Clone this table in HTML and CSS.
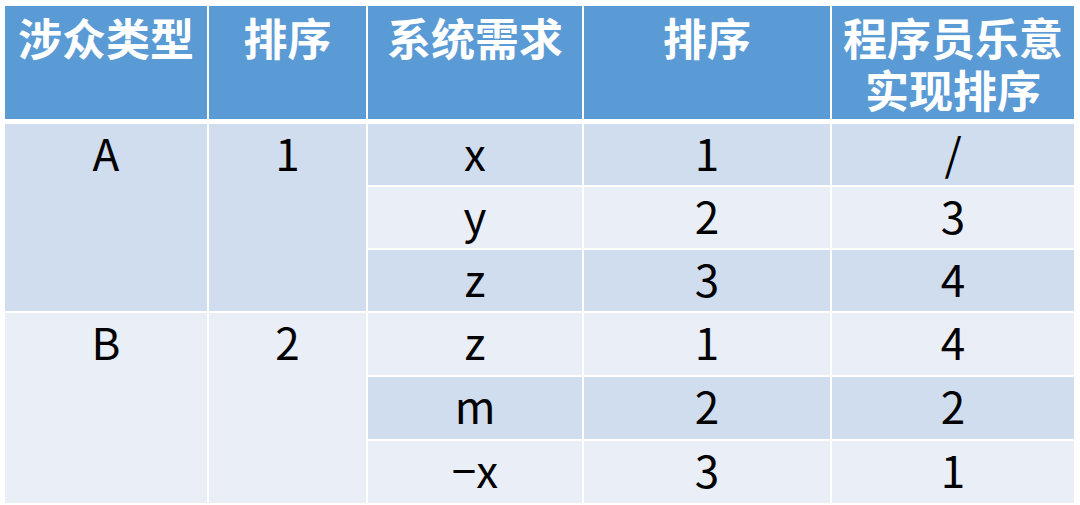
FILE: index.html
```html
<!DOCTYPE html>
<html lang="zh">
<head>
<meta charset="utf-8">
<title>涉众需求排序</title>
<link rel="stylesheet" href="styles.css">
</head>
<body>
<table class="grid">
  <colgroup>
    <col class="c1"><col class="c2"><col class="c3"><col class="c4"><col class="c5">
  </colgroup>
  <thead>
    <tr>
      <th>涉众类型</th>
      <th>排序</th>
      <th>系统需求</th>
      <th>排序</th>
      <th><span class="ln">程序员乐意</span><span class="ln">实现排序</span></th>
    </tr>
  </thead>
  <tbody>
    <tr class="r61">
      <td class="dark" rowspan="3">A</td>
      <td class="dark" rowspan="3">1</td>
      <td class="dark">x</td>
      <td class="dark">1</td>
      <td class="dark">/</td>
    </tr>
    <tr class="r61">
      <td class="light">y</td>
      <td class="light">2</td>
      <td class="light">3</td>
    </tr>
    <tr class="r61">
      <td class="dark">z</td>
      <td class="dark">3</td>
      <td class="dark">4</td>
    </tr>
    <tr class="r62">
      <td class="light" rowspan="3">B</td>
      <td class="light" rowspan="3">2</td>
      <td class="light">z</td>
      <td class="light">1</td>
      <td class="light">4</td>
    </tr>
    <tr class="r62">
      <td class="dark">m</td>
      <td class="dark">2</td>
      <td class="dark">2</td>
    </tr>
    <tr class="r62">
      <td class="light">−x</td>
      <td class="light">3</td>
      <td class="light">1</td>
    </tr>
  </tbody>
</table>
</body>
</html>
```

FILE: styles.css
```css
html, body {
  margin: 0;
  padding: 0;
  background: #ffffff;
}

body {
  width: 1080px;
  height: 505px;
  overflow: hidden;
}

.grid {
  border-collapse: separate;
  border-spacing: 2px;
  margin: 4px 0 0 3px;
  table-layout: fixed;
  width: 1071px;
  font-family: "Noto Sans CJK SC", sans-serif;
}

.c1 { width: 202px; }
.c2 { width: 157px; }
.c3 { width: 214px; }
.c4 { width: 246px; }
.c5 { width: 242px; }

.grid th {
  background: #5b9bd5;
  color: #ffffff;
  font-weight: 700;
  font-size: 44px;
  line-height: 52px;
  height: 116px;
  box-sizing: border-box;
  padding: 5px 0 0 0;
  vertical-align: top;
  text-align: center;
  border-bottom: 3px solid #ffffff;
  white-space: nowrap;
}

.ln {
  display: block;
  height: 52px;
  line-height: 52px;
  overflow: visible;
}

.grid td {
  font-size: 44px;
  line-height: 44px;
  color: #000000;
  font-weight: 400;
  text-align: center;
  vertical-align: top;
  padding: 6px 0 0 0;
  box-sizing: border-box;
}

.r61 td { height: 61px; }
.r62 td { height: 62px; }

.grid td[rowspan] { height: auto; }

.dark { background: #d0ddee; }
.light { background: #e9eef7; }
```
